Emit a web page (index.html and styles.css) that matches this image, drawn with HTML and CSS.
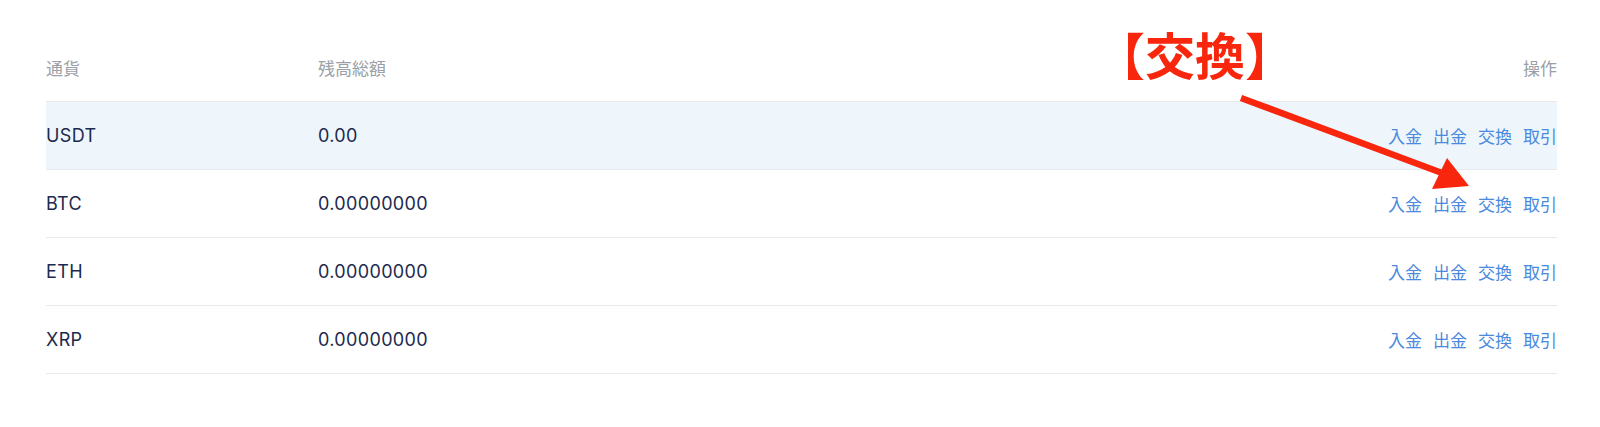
FILE: index.html
```html
<!DOCTYPE html>
<html lang="ja">
<head>
<meta charset="utf-8">
<title>資産</title>
<link rel="stylesheet" href="styles.css">
</head>
<body>
<div class="page">
  <div class="table">
    <div class="row head">
      <div class="cell c1">通貨</div>
      <div class="cell c2">残高総額</div>
      <div class="cell c3">操作</div>
    </div>
    <div class="row hl">
      <div class="cell c1 latin">USDT</div>
      <div class="cell c2 latin">0.00</div>
      <div class="cell c3 actions"><a>入金</a><a>出金</a><a>交換</a><a>取引</a></div>
    </div>
    <div class="row">
      <div class="cell c1 latin">BTC</div>
      <div class="cell c2 latin">0.00000000</div>
      <div class="cell c3 actions"><a>入金</a><a>出金</a><a>交換</a><a>取引</a></div>
    </div>
    <div class="row">
      <div class="cell c1 latin">ETH</div>
      <div class="cell c2 latin">0.00000000</div>
      <div class="cell c3 actions"><a>入金</a><a>出金</a><a>交換</a><a>取引</a></div>
    </div>
    <div class="row">
      <div class="cell c1 latin">XRP</div>
      <div class="cell c2 latin">0.00000000</div>
      <div class="cell c3 actions"><a>入金</a><a>出金</a><a>交換</a><a>取引</a></div>
    </div>
  </div>
  <div class="note">【交換】</div>
  <svg class="arrow" width="1600" height="427" viewBox="0 0 1600 427">
    <line x1="1241" y1="98" x2="1442" y2="173" stroke="#f7260c" stroke-width="6.5"/>
    <polygon points="1447,158 1432,189 1469,186" fill="#f7260c"/>
  </svg>
</div>
</body>
</html>
```

FILE: styles.css
```css
html, body {
  margin: 0;
  padding: 0;
  background: #ffffff;
}

.page {
  position: relative;
  width: 1600px;
  height: 427px;
  box-sizing: border-box;
  padding: 34px 43px 0 46px;
  font-family: Inter, "Noto Sans CJK JP", sans-serif;
  color: #1b2a4e;
}

.table {
  display: flex;
  flex-direction: column;
}

.row {
  display: flex;
  align-items: center;
  height: 67px;
  border-bottom: 1px solid #e7e9ec;
  font-size: 18px;
}

.row.hl {
  background: #eef6fc;
}

.row.head {
  color: #9b9fa7;
  font-family: "Noto Sans CJK JP", sans-serif;
  font-size: 17px;
}

.latin {
  letter-spacing: 0.35px;
}

.cell.c1 {
  width: 272px;
  flex: none;
}

.cell.c2 {
  flex: 1;
}

.cell.c3 {
  flex: none;
  text-align: right;
}

.actions {
  display: flex;
  gap: 11px;
}

.actions a {
  color: #4a89dc;
  font-family: "Noto Sans CJK JP", sans-serif;
  font-size: 17px;
  cursor: pointer;
}

.note {
  position: absolute;
  left: 1095px;
  top: 16px;
  font-family: "Noto Sans CJK JP", sans-serif;
  font-weight: 700;
  font-size: 50px;
  line-height: 74px;
  color: #f7260c;
}

.arrow {
  position: absolute;
  left: 0;
  top: 0;
  pointer-events: none;
}
```
